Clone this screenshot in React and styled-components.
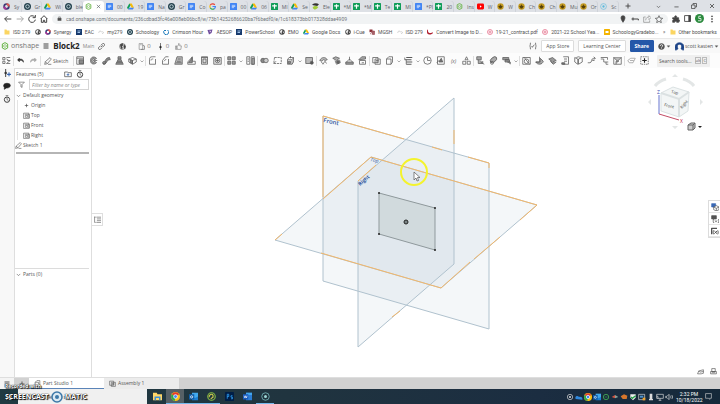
import { useState } from "react";
import styled, { createGlobalStyle } from "styled-components";

const GlobalStyle = createGlobalStyle`
  * {
    box-sizing: border-box;
  }

  body {
    margin: 0;
    font-family: "Open Sans", "Noto Sans", sans-serif;
    font-size: 5px;
    color: #505050;
    background: #fff;
  }

  button, input {
    font: inherit;
    color: inherit;
    margin: 0;
    padding: 0;
    border: 0;
    background: none;
  }

  a {
    color: inherit;
    text-decoration: none;
  }

  svg {
    display: block;
    flex: none;
  }
`;

const Page = styled.div`
  display: flex;
  flex-direction: column;
  min-height: 100vh;
`;

/* browser */

const TabStrip = styled.div`
  display: flex;
  height: 12px;
  background: #dee1e6;
`;

const TabList = styled.div`
  display: flex;
  flex: 1;
  padding-left: 1px;
  min-width: 0;
`;

const BrowserTab = styled.button`
  display: flex;
  flex: 1 1 0;
  min-width: 0;
  align-items: center;
  gap: 4px;
  padding-left: 2px;
  margin-top: 1px;
  overflow: hidden;
  white-space: nowrap;
  color: #5f6368;
  border-radius: 3px 3px 0 0;
  background: ${(props) => (props.$active ? "#fff" : "none")};
  box-shadow: ${(props) => (props.$active ? "none" : "inset -1px 0 0 #cfd3d9")};
`;

const WindowButtons = styled.div`
  display: flex;
  width: 101px;
  align-items: center;
  justify-content: space-between;
  padding: 0 5px 0 6px;
`;

const IconButton = styled.button`
  display: flex;
  align-items: center;
  justify-content: center;
  color: ${(props) => props.$color || "#444"};
`;

const AddressRow = styled.div`
  display: flex;
  align-items: center;
  height: 13px;
  padding: 0 4px;
  gap: 4px;
  background: #fff;
`;

const NavButtons = styled.div`
  display: flex;
  gap: 4px;
`;

const AddressBox = styled.label`
  display: flex;
  flex: 1;
  align-items: center;
  gap: 4px;
  height: 10px;
  padding: 0 5px;
  border-radius: 5px;
  background: #f1f3f4;
`;

const AddressInput = styled.input`
  flex: 1;
  min-width: 0;
  font-family: Roboto, sans-serif;
  color: #70757a;
  outline: none;
`;

const AddressIcons = styled.div`
  display: flex;
  gap: 4px;
`;

const BookmarkRow = styled.nav`
  display: flex;
  align-items: center;
  justify-content: space-between;
  height: 13px;
  padding: 0 3px 0 4px;
  font-family: Roboto, sans-serif;
  white-space: nowrap;
`;

const Bookmark = styled.a`
  display: flex;
  align-items: center;
  gap: 3px;
`;

/* document header */

const Header = styled.header`
  display: flex;
  align-items: center;
  justify-content: space-between;
  height: 15px;
  padding: 0 1px;
  border-top: 1px solid #e9e9e9;
  background: #f8f8f8;
`;

const HeaderGroup = styled.div`
  display: flex;
  align-items: center;
  gap: ${(props) => props.$gap}px;
`;

const Stats = styled.div`
  display: flex;
  align-items: center;
  gap: 6px;
  margin-left: 10px;
`;

const Brand = styled.a`
  display: flex;
  align-items: center;
  gap: 2px;
  font-size: 7px;
  line-height: 8px;
  color: #777;
`;

const DocumentName = styled.h1`
  margin: 0;
  font-size: 8px;
  line-height: 12px;
  font-weight: 700;
  color: #222;
`;

const Muted = styled.span`
  color: #888;
`;

const Counter = styled.button`
  display: flex;
  align-items: center;
  gap: 2px;
  font-size: 6px;
  color: #777;
`;

const HeaderButton = styled.button`
  height: 12px;
  padding: 0 4px;
  border: 1px solid ${(props) => (props.$primary ? "#2457a8" : "#dcdcdc")};
  border-radius: 1px;
  font-weight: ${(props) => (props.$primary ? 700 : 400)};
  color: ${(props) => (props.$primary ? "#fff" : "#555")};
  background: ${(props) => (props.$primary ? "#2457a8" : "#fff")};
`;

/* toolbar */

const Toolbar = styled.div`
  display: flex;
  align-items: center;
  height: 15px;
  padding-right: 10px;
  background: #fcfcfc;
`;

const Tool = styled.button`
  display: flex;
  flex: none;
  align-items: center;
  justify-content: center;
  width: ${(props) => (props.$arrow ? 6 : 13)}px;
  height: 13px;
  color: #5a5a5a;
`;

const ToolDivider = styled.span`
  flex: none;
  width: 1px;
  height: 10px;
  background: #dedede;
`;

const SketchButton = styled.button`
  display: flex;
  flex: none;
  align-items: center;
  gap: 1px;
  height: 13px;
  width: 32px;
  padding-left: 3px;
  color: #555;
`;

const SearchTools = styled.button`
  display: flex;
  flex: none;
  align-items: center;
  justify-content: space-between;
  width: 53px;
  height: 12px;
  margin-left: auto;
  padding: 0 3px 0 2px;
  border-radius: 1px;
  white-space: nowrap;
  color: #555;
  background: #efefef;
`;

const Keys = styled.span`
  display: flex;
  gap: 1px;
`;

const Key = styled.kbd`
  height: 7px;
  border: 1px solid #bbb;
  font-family: inherit;
  font-size: 4px;
  line-height: 5px;
`;

/* workspace */

const Workspace = styled.main`
  display: flex;
  flex: 1;
`;

const Rail = styled.aside`
  display: flex;
  flex-direction: column;
  align-items: center;
  gap: 5px;
  width: 14px;
  padding-top: 1px;
  background: #f8f8f8;
`;

const Panel = styled.section`
  display: flex;
  flex-direction: column;
  width: 78px;
  border: 1px solid #dedede;
  border-bottom: 0;
`;

const PanelHeader = styled.div`
  display: flex;
  align-items: center;
  height: 10px;
  padding: 0 7px 0 1px;
  gap: 4px;
`;

const PanelTitle = styled.h2`
  flex: 1;
  margin: 0;
  font-size: 5px;
  font-weight: 400;
`;

const FilterRow = styled.label`
  display: flex;
  align-items: center;
  gap: 4px;
  height: 11px;
  padding: 0 2px 0 3px;
`;

const FilterInput = styled.input`
  flex: 1;
  min-width: 0;
  height: 11px;
  padding: 0 2px;
  border: 1px solid #d5d5d5;
  font-style: italic;
  background: #fff;

  &::placeholder {
    color: #888;
    opacity: 1;
  }
`;

const Tree = styled.ul`
  flex: 1;
  margin: 0;
  padding: 0;
  list-style: none;
`;

const TreeChildren = styled.ul`
  margin: 0 0 0 2px;
  padding: 0 0 0 5px;
  list-style: none;
  border-left: 1px solid #e4e4e4;
`;

const TreeItem = styled.button`
  display: flex;
  align-items: center;
  gap: 1px;
  width: 100%;
  height: 10px;
  color: #555;
`;

const RollbackBar = styled.li`
  height: 2px;
  margin: 2px 2px 0 1px;
  background: #b5b5b5;
`;

const Parts = styled.div`
  height: 109px;
  margin-right: 2px;
  border-top: 1px solid #dcdcdc;
`;

const Viewport = styled.section`
  position: relative;
  flex: 1;
  min-width: 0;
  background: #fff;
`;

const Scene = styled.svg`
  width: 100%;
  height: 100%;
  font-family: "Open Sans", sans-serif;
`;

const ViewCube = styled.svg`
  position: absolute;
  top: 4px;
  right: 12px;
  font-family: "Open Sans", sans-serif;
`;

const ListToggle = styled.button`
  position: absolute;
  top: 145px;
  left: 0;
  display: flex;
  align-items: center;
  justify-content: center;
  width: 11px;
  height: 13px;
  border: 1px solid #dedede;
  border-left: 0;
  background: #fff;
`;

const SideDock = styled.div`
  position: absolute;
  top: 132px;
  right: 0;
  width: 12px;
  border: 1px solid #dcdcdc;
  border-right: 0;
  background: #fff;
`;

const DockButton = styled.button`
  display: flex;
  align-items: center;
  justify-content: center;
  width: 100%;
  height: 12px;
  border-bottom: 1px solid #e6e6e6;
`;

const ViewActions = styled.div`
  position: absolute;
  right: 3px;
  bottom: 2px;
  display: flex;
  gap: 6px;
`;

/* bottom */

const ElementTabs = styled.div`
  display: flex;
  height: 12px;
  background: #d1d1d1;
  border-top: 1px solid #dedede;
`;

const ManagerButton = styled.button`
  display: flex;
  align-items: center;
  justify-content: center;
  width: ${(props) => props.$width}px;
  background: ${(props) => props.$background};
`;

const ElementTab = styled.button`
  display: flex;
  align-items: center;
  gap: 2px;
  width: 75px;
  padding-left: 5px;
  color: #555;
  border-bottom: 1px solid ${(props) => (props.$active ? "#5b84b8" : "#ececec")};
  background: ${(props) => (props.$active ? "#fff" : "#ececec")};
`;

const Taskbar = styled.footer`
  display: flex;
  height: 15px;
  color: #fff;
  background: linear-gradient(90deg, #203a42 0%, #20343f 40%, #1b2d41 75%, #15293a 100%);
`;

const StartButton = styled.button`
  display: flex;
  align-items: center;
  justify-content: center;
  width: 18px;
`;

const TaskSearch = styled.input`
  width: 129px;
  padding-left: 15px;
  color: #444;
  background: #f0f0f0;

  &::placeholder {
    color: #444;
    opacity: 1;
  }
`;

const TaskApp = styled.button`
  display: flex;
  align-items: center;
  justify-content: center;
  width: 18px;
  border-bottom: 1px solid ${(props) => (props.$running ? "#76b9ed" : "transparent")};
  background: ${(props) => (props.$active ? "#566066" : "none")};
`;

const TaskApps = styled.div`
  display: flex;
  flex: 1;
  padding-left: 1px;
`;

const Tray = styled.div`
  display: flex;
  align-items: center;
  gap: 1px;
  padding-right: 8px;
`;

const Clock = styled.time`
  width: 30px;
  padding: 0 2px;
  line-height: 6px;
  text-align: center;
  white-space: nowrap;
  font-family: Roboto, sans-serif;
`;

const Recorder = styled.div`
  position: absolute;
  left: 5px;
  bottom: 0;
  font-weight: 700;
  color: #fff;
  text-shadow: 0 0 1px #000, 0 0 1px #000, 1px 1px 1px #000;
  pointer-events: none;
`;

const RecorderCaption = styled.div`
  font-size: 5px;
  line-height: 7px;
`;

const RecorderName = styled.div`
  display: flex;
  align-items: center;
  gap: 2px;
  font-size: 7px;
  line-height: 14px;
`;

const Frame = styled.div`
  position: relative;
`;

// every shape is drawn on a 12 x 12 grid
const shapes = {
  tree: <><path d="M1 2h3v3h-3zM1 7h3v3h-3zM6 2h5M6 4l3 2M7 6h4M6 10l5-4M6 10h5" /></>,
  undo: <path d="M4 2L1 5l3 3V6c4-1 6 0 7 3 0-5-3-6-7-5z" fill="#222" stroke="#222" />,
  redo: <path d="M8 2l3 3-3 3V6C4 5 2 6 1 9c0-5 3-6 7-5z" fill="#aaa" stroke="#999" />,
  pencil: <path d="M1 11l1-4 7-6 2 2-6 7-4 1zM2 7l3 3M6 11h5" />,
  extrude: <><path d="M1 1h9v10H1zM1 3h9" /><path d="M4 5h6v5H4z" fill="#888" /></>,
  revolve: <><path d="M10 3C7 0 2 1 2 6s5 6 8 3L8 7C6 9 4 8 4 6s2-3 4-1z" fill="#999" /><path d="M5 6h6" /></>,
  sweep: <><path d="M1 9c4 1 2-7 9-7l1 3c-5-1-4 6-9 6z" fill="#888" /><circle cx="3" cy="9" r="2" /></>,
  loft: <path d="M4 1h4v4l3 6H1l3-6zM3 7h6M2 9h8M4 4h4" fill="#999" />,
  thicken: <><path d="M1 4l5-2 5 2v4l-5 3-5-3zM1 4l5 2v5M6 6l5-2" /><path d="M3 5l3 1v4l-3-1z" fill="#888" /></>,
  down: <path d="M3 5l3 3 3-3" />,
  fillet: <path d="M2 11V5c0-3 1-4 4-4h4M2 11h8V4M4 6c0-2 1-2 3-2" />,
  chamfer: <path d="M2 11V6l4-5h4M2 11h8V4M4 7l3-3" />,
  draft: <><path d="M4 1h7v10H1z" fill="#bbb" /><path d="M5 4h4M4 7h5M3 9h7" /></>,
  rib: <><path d="M1 11h10V7H7V1L1 8z" /><path d="M7 2v7H2z" fill="#888" /></>,
  shell: <><path d="M2 1h8v10H2z" fill="#ddd" /><path d="M4 4h4v5H4zM2 2h8" /></>,
  hole: <><path d="M1 2h10v9H1z" fill="#e4e4e4" /><circle cx="6" cy="6" r="3" /><path d="M6 4v4M4 6h4" /></>,
  pattern: <><path d="M1 1h4v4H1zM7 1h4v4H7zM1 7h4v4H1zM7 7h4v4H7z" fill="#999" /></>,
  mirror: <><path d="M1 1h4v10H1zM11 1H7v10h4z" /><path d="M8 3h3v8H8z" fill="#aaa" /><path d="M2 4h2M2 7h2" /></>,
  boolean: <><circle cx="4" cy="6" r="3" fill="#888" /><circle cx="8" cy="6" r="3" fill="#ccc" /></>,
  split: <><path d="M2 2h9v8H1z" strokeDasharray="3 1" /><path d="M1 10l3-3" /></>,
  transform: <><path d="M2 5h6v6H2zM2 5l2-3h6v6l-2 3M8 5l2-3" /><path d="M3 7h3v3H3z" fill="#888" /><path d="M6 0v3" /></>,
  remove: <><path d="M1 2h9v8H1z" fill="#bbb" /><circle cx="9" cy="9" r="2" fill="#555" /></>,
  face: <><path d="M1 6c2-5 8-5 10-1L8 6c-2-2-3-1-4 1z" fill="#bbb" /><path d="M5 11l3-4 2 3M3 8l3 3" /></>,
  moveFace: <><path d="M1 3l4-2 5 2-4 3z" fill="#aaa" /><path d="M4 6l2 5 5-2-1-4" /><circle cx="8" cy="8" r="2" fill="#666" /></>,
  replace: <><path d="M1 8h10v3H1z" fill="#999" /><path d="M2 8l4-4 4 4M6 1v5" /></>,
  offset: <><path d="M2 6h8v5H2z" /><path d="M1 5l4-4h5v3z" fill="#aaa" /><path d="M5 9h3" /></>,
  copy: <><path d="M1 2h7v7H1zM4 4h7v7H4z" /><path d="M5 6h4M5 8h4" /></>,
  surface: <><path d="M2 4h6v7H2zM2 4l3-3h5v7l-2 3" /></>,
  sheet: <><path d="M3 2h8M1 5h9M3 8h8M3 11h7" strokeWidth="1.5" /><path d="M1 2v3M3 5v6" /></>,
  helix: <><circle cx="6" cy="6" r="5" /><path d="M6 2v4h4" /></>,
  point: <><path d="M2 1h9v10H2z" /><path d="M4 8l3-5 2 5zM1 9l4-4" fill="#777" /></>,
  tripod: <><path d="M6 1l2 4H4zM1 7h4v4H1zM7 7h4v4H7z" /></>,
  flange: <><path d="M1 1h6v4H1zM3 5v5h6V7" fill="#aaa" /><path d="M6 8l5 3" /></>,
  bend: <><ellipse cx="6" cy="5" rx="5" ry="3" transform="rotate(-40 6 5)" fill="#aaa" /><circle cx="4" cy="9" r="2" /></>,
  tab: <><path d="M1 2h8v3H1zM4 5h6v3H4zM7 8h4v3" fill="#999" /></>,
  form: <><path d="M1 2h10v9H1z" /><circle cx="6" cy="7" r="3" /><path d="M3 2l7 9" /></>,
  gusset: <><path d="M1 8c2 4 9 4 10-1L7 3v5z" fill="#aaa" /><path d="M6 1v7H1" /></>,
  hem: <><path d="M1 4l5-2 5 4-5 2zM3 7l4 4 4-3" fill="#999" /></>,
  joint: <><path d="M3 1h7v10H2M4 4h4M4 7h4" /><path d="M1 9h4v2H1z" fill="#777" /></>,
  corner: <><path d="M1 2l4 2v7L1 8zM11 2L6 4v7l5-3z" /><path d="M3 2l3-1 3 1" /></>,
  bendRelief: <path d="M1 9h3c3 0 1-6 5-6h2M7 6h3M9 1l2 2-2 2" />,
  breakCorner: <path d="M1 2h9M1 4h4v4h6M10 2v3M8 8v3h3" />,
  makeCorner: <><path d="M1 2h10v9H1z" /><path d="M1 2l5 5 5-5M4 11V7h4" fill="#bbb" /></>,
  finish: <path d="M1 6l4-3h6L8 9H3zM4 6h5" stroke="#999" />,
  addTool: <><path d="M1 1h10v10H1z" strokeDasharray="2 1" /><path d="M6 3v6M3 6h6" strokeWidth="1.5" stroke="#222" /></>,
  filter: <path d="M1 2h10L7 6v5L5 10V6z" />,
  folder: <><path d="M1 3h4l1 1h5v6H1z" /><path d="M6 5v4M4 7h4" stroke="#2457a8" /></>,
  stopwatch: <><circle cx="6" cy="7" r="4" strokeWidth="1.5" /><path d="M4 1h4M6 4v3l2 1" /></>,
  versions: <><path d="M4 0v12" strokeWidth="1.5" /><circle cx="4" cy="6" r="1.5" fill="#222" /><path d="M9 5v6M6 8h6" stroke="#2457a8" strokeWidth="1.5" /></>,
  comment: <path d="M1 5c0-4 10-4 10 0s-5 4-6 4l-3 2V8C1 7 1 6 1 5z" fill="#222" stroke="#222" />,
  plane: <><path d="M1 2h9v9H1zM3 4h8v7" /><path d="M4 6h4v3H4z" /></>,
  origin: <><path d="M6 3v6M3 6h6" /><circle cx="6" cy="6" r="1" /></>,
  list: <path d="M4 2h8M5 5h7M5 8h7M4 11h8M1 1v10M1 2h2M1 11h2" />,
  back: <path d="M11 6H1M5 2L1 6l4 4" strokeWidth="1.5" />,
  forward: <path d="M1 6h10M7 2l4 4-4 4" strokeWidth="1.5" />,
  reload: <path d="M10 3a5 5 0 1 0 1 4M11 0v4H7" strokeWidth="1.5" />,
  home: <path d="M1 6l5-5 5 5M2 5v6h3V8h2v3h3V5" strokeWidth="1.5" />,
  lock: <><path d="M2 5h8v6H2z" fill="currentColor" /><path d="M4 5V2h4v3" /></>,
  pin: <path d="M6 11C4 8 3 6 3 4a3 3 0 0 1 6 0c0 2-1 4-3 7z" fill="currentColor" />,
  key: <><circle cx="3" cy="6" r="1.500" strokeWidth="1.500" /><path d="M5 6h6v2" strokeWidth="1.500" /></>,
  share: <path d="M4 3H1v8h9V8M4 8c0-4 3-5 5-5V1l3 3-3 3V5" stroke="#888" />,
  star: <path d="M6 1l1.500 3.500 4 .5-3 2.500 1 4L6 9.500 2.500 11.500l1-4-3-2.500 4-.5z" />,
  puzzle: <path d="M1 4h3c-1-4 4-4 3 0h3v3c2 0 2 3 0 3v1H7c0-2-3-2-3 0H1V8c2 0 2-2 0-2z" fill="currentColor" />,
  sidebar: <><path d="M1 1h10v10H1z" strokeWidth="1.5" /><path d="M8 1h3v10H8z" fill="currentColor" /></>,
  dots: <><circle cx="6" cy="2" r=".8" fill="currentColor" /><circle cx="6" cy="6" r=".8" fill="currentColor" /><circle cx="6" cy="10" r=".8" fill="currentColor" /></>,
  plus: <path d="M6 1v10M1 6h10" strokeWidth="1.8" />,
  minus: <path d="M1 7h10" strokeWidth="1.8" />,
  restore: <path d="M1 4h7v7H1zM4 4V1h7v7H8" strokeWidth="1.5" />,
  close: <path d="M2 2l8 8M10 2l-8 8" strokeWidth="1.6" />,
  menu: <path d="M1 2h10M1 6h10M1 10h10" strokeWidth="2" />,
  link: <path d="M5 7l3-3M4 5L1 8c-1 2 1 4 3 3l3-3M5 4l3-3c2-1 4 1 3 3L8 7" strokeWidth="1.3" />,
  globe: <><circle cx="6" cy="6" r="5" /><path d="M2 3l4-2 1 3-2 2 1 3-2 1zM9 3l2 3-1 4-2-3z" fill="currentColor" /></>,
  document: <><path d="M2 1h6v10H2z" /><path d="M8 4l3 1v6H5M4 3h2" strokeWidth="1.3" /></>,
  branch: <><path d="M6 0v12" stroke="#222" /><circle cx="6" cy="7" r="1.500" fill="#222" stroke="#222" /></>,
  thumb: <path d="M1 5h2v6H1zM3 6l3-2V1c2 0 3 1 2 4h3l-1 6H4z" />,
  learn: <path d="M3 1C1 1 3 5 1 6c2 1 0 5 2 5M9 1c2 0 0 4 2 5-2 1 0 5-2 5M4 6l1 2 3-4" />,
  help: <><circle cx="6" cy="6" r="5" fill="#555" stroke="#555" /><path d="M4 5c0-3 4-3 4 0 0 1-2 1-2 3M6 9v1" stroke="#fff" strokeWidth="1.3" /></>,
  caret: <path d="M3 4h6L6 8z" fill="currentColor" />,
  user: <path d="M1 11c1-1 2-1 3-2C0 1 12 1 8 9c1 1 2 1 3 2C14 5 10 1 6 1S-2 5 1 11z" fill="#1d4488" stroke="#1d4488" />,
  cubes: <><path d="M1 1h6v5H1z" fill="#3a68b5" stroke="#3a68b5" /><path d="M4 6l4-2 4 2v4l-4 2-4-2zM4 6l4 2v4M8 8l4-2" fill="#fff" /></>,
  config: <><path d="M1 1h7v5H1z" fill="#555" /><path d="M4 6c-1 2-1 4 0 6M11 6c1 2 1 4 0 6M6 8l3 3M9 8l-3 3M1 3h7" /></>,
  variables: <><path d="M1 11V2h8" strokeWidth="2" /><path d="M4 5c-1 2-1 4 0 6M10 5c1 2 1 4 0 6M5 6l4 4M9 6l-4 4" strokeWidth="1.4" /></>,
  scale: <path d="M1 10l2-5 8-2v6l-4 1zM3 5l2 2 6-1" />,
  print: <path d="M3 1h6v5H3zM1 6h10v4H1zM3 8h6" />,
};

function Icon({ name, size = 9 }) {
  return (
    <svg width={size} height={size} viewBox="0 0 12 12" fill="none" stroke="currentColor" strokeWidth="1" strokeLinejoin="round" aria-hidden="true">
      {shapes[name]}
    </svg>
  );
}

const logos = {
  synergy: <><circle cx="6" cy="6" r="4" fill="none" stroke="#3a3b78" strokeWidth="3" /><path d="M6 2a4 4 0 0 1 4 4" fill="none" stroke="#e2574c" strokeWidth="3" /><path d="M2 6a4 4 0 0 0 4 4" fill="none" stroke="#a83293" strokeWidth="3" /></>,
  schoology: <><circle cx="6" cy="6" r="6" fill="#23404d" /><circle cx="6" cy="6" r="3" fill="none" stroke="#d5e6ea" strokeWidth="1.500" /></>,
  drive: <><path d="M4 1h4l4 7H8z" fill="#fbbc04" /><path d="M4 1L0 8l2 3 4-7z" fill="#0f9d58" /><path d="M2 11h8l2-3H4z" fill="#4285f4" /></>,
  docs: <><rect width="12" height="12" rx="1" fill="#4285f4" /><path d="M3 4h6M3 6h6M3 8h4" stroke="#fff" /></>,
  sheets: <><rect width="12" height="12" rx="1" fill="#0f9d58" /><path d="M2 5h8M6 2v8" stroke="#fff" strokeWidth="2" /></>,
  google: <><path d="M10 3a5 5 0 0 0-8 1" fill="none" stroke="#ea4335" strokeWidth="2" /><path d="M2 4a5 5 0 0 0 0 4" fill="none" stroke="#fbbc04" strokeWidth="2" /><path d="M2 8a5 5 0 0 0 7 2" fill="none" stroke="#34a853" strokeWidth="2" /><path d="M6 6h5c0 2-1 3-2 4" fill="none" stroke="#4285f4" strokeWidth="2" /></>,
  onshape: <><path d="M6 1l4 2v6l-4 2-4-2V3z" fill="none" stroke="#66b345" strokeWidth="1.500" /><path d="M4 5l2-1 2 1v2L6 8 4 7z" fill="none" stroke="#66b345" /></>,
  leaf: <><path d="M0 3c4-3 8-3 12-1L9 5 2 4z" fill="#333" /><path d="M1 8c4-5 8-2 10-1-3 4-7 6-10 1z" fill="#a3cd39" /></>,
  youtube: <><rect y="1" width="12" height="10" rx="2" fill="#f00" /><path d="M5 4l3 2-3 2z" fill="#fff" /></>,
  gold: <><circle cx="6" cy="6" r="5.500" fill="#c49b22" /><path d="M3 5l2 3 1-3 1 3 2-3" fill="none" stroke="#54400a" strokeWidth="2" /></>,
  screencast: <><circle cx="6" cy="6" r="5" fill="none" stroke="#58b9dc" /><circle cx="6" cy="6" r="2" fill="#58b9dc" /></>,
  folderYellow: <path d="M1 1h4l1 2h5v8H1z" fill="#fbd561" />,
  globe: <><circle cx="6" cy="6" r="5.500" fill="#444" /><path d="M3 3l3-1 1 2-2 2 1 3-2 0-2-3zM9 4l1 3-2 1z" fill="#fff" /></>,
  navy: <><rect width="12" height="12" fill="#173a6d" /><path d="M3 4h6M3 7h5" stroke="#9fc1e6" strokeWidth="2" /></>,
  cloud: <path d="M2 8c-2-4 4-5 5-2 4-2 6 3 1 3" fill="none" stroke="#aaa" />,
  swirl: <path d="M9 2a5 5 0 1 1-5 0L6 4" fill="none" stroke="#1476b8" strokeWidth="2" />,
  aesop: <><path d="M1 2l10-1-2 7-5 3z" fill="#6d4a9b" /><path d="M5 3l3 1-2 3z" fill="#fff" /></>,
  maroon: <><path d="M1 1h6v5H1z" fill="#8a2c35" /><path d="M4 4h7v7H7zM2 7l2 4" fill="#a7626a" stroke="#8a2c35" /></>,
  adobe: <path d="M2 1c0 5 0 6 3 7s6-2 7-1-3 4-7 4-5-2-5-5 0-5 2-5z" fill="#b02030" />,
  pink: <><circle cx="6" cy="6" r="5" fill="none" stroke="#e36b87" strokeWidth="1.500" /><circle cx="6" cy="6" r="2" fill="none" stroke="#e36b87" strokeWidth="1.500" /></>,
  slides: <><rect width="12" height="12" rx="1" fill="#f4b400" /><path d="M3 4h6v4H3z" fill="#fff" /></>,
  green: <><circle cx="6" cy="6" r="6" fill="#2b8a3e" /><path d="M8 3H5v3h3v3H4" fill="none" stroke="#fff" /></>,
  windows: <path d="M0 1h5v5H0zM6 1h6v5H6zM0 7h5v5H0zM6 7h6v5H6z" fill="#fff" />,
  explorer: <><path d="M0 1h5l1 2h6v8H0z" fill="#ffd667" /><path d="M2 6h8v5H8V8H4v3H2z" fill="#3c8fd6" /></>,
  chrome: <><circle cx="6" cy="6" r="6" fill="#fbc116" /><path d="M6 6L1 3a6 6 0 0 1 10 0z" fill="#e33b2e" /><path d="M6 6L1 3a6 6 0 0 0 4 9z" fill="#2da94f" /><circle cx="6" cy="6" r="2.500" fill="#4285f4" stroke="#fff" /></>,
  outlook: <><path d="M4 1h8v9H4z" fill="#42a9ec" /><path d="M4 6l4 2 4-2v5H4z" fill="#1d7fd1" /><rect y="3" width="7" height="7" fill="#0f5ca8" /><circle cx="3.500" cy="6.500" r="1.500" fill="none" stroke="#fff" /></>,
  camo: <><circle cx="6" cy="6" r="5" fill="none" stroke="#86bc42" strokeWidth="1.500" /><path d="M3 7a3 3 0 0 1 5-3M5 9l3-2V4" fill="none" stroke="#d3cf4c" strokeWidth="1.500" /></>,
  photoshop: <><rect width="12" height="12" rx="1" fill="#001e46" /><path d="M3 9V3h2v3H3M10 5H8v2h2v2H8" fill="none" stroke="#31a8ff" /></>,
  word: <><path d="M4 1h8v10H4z" fill="#2b7cd3" /><path d="M4 1h8v3H4z" fill="#41a5ee" /><rect y="3" width="7" height="7" fill="#185abd" /><path d="M1.500 5l1 3 1-3 1 3 1-3" fill="none" stroke="#fff" strokeWidth=".8" /></>,
  ring: <><circle cx="6" cy="6" r="5" fill="none" stroke="#7cc1c4" /><circle cx="6" cy="6" r="2" fill="#9ed7d5" /></>,
  record: <><circle cx="6" cy="6" r="4" fill="none" stroke="#ddd" /><circle cx="6" cy="6" r="1.500" fill="#ddd" /></>,
  onedrive: <path d="M1 9c-2-4 3-6 5-3 3-1 6 1 5 4z" fill="#2f88dd" />,
  greenRing: <><circle cx="6" cy="6" r="4" fill="none" stroke="#3c9650" strokeWidth="1.500" /><path d="M4 6h4" stroke="#3c9650" /></>,
  bird: <><path d="M1 6l5-3v5z" fill="#d65441" /><path d="M6 3l5 3-5 2z" fill="#8ca39a" /></>,
  fox: <path d="M1 5l5-3 5 2-1 5H4z" fill="#d5762c" />,
  shield: <><path d="M2 2h8v5l-4 4-4-4z" fill="#eee" /><path d="M3 6l2 2 5-4" fill="none" stroke="#24a148" strokeWidth="2" /></>,
  monitor: <><path d="M1 2h9v8H1z" fill="none" stroke="#ddd" /><path d="M7 7h4v4H7z" fill="#f0a42e" /><path d="M3 4h5v3H3z" fill="#4b91cd" /></>,
  mic: <path d="M4 1h4v8H4zM3 9h6v2H3z" fill="#ddd" />,
  network: <path d="M1 2h10v6H1zM4 11h4M6 8v3M1 5h2v4" fill="none" stroke="#ddd" />,
  volume: <path d="M1 5h2l3-3v8L3 7H1zM8 4c1 1 1 3 0 4M10 3c2 2 2 4 0 6" fill="none" stroke="#ddd" />,
  notification: <path d="M1 1h10v8H8v2L6 9H1z" fill="none" stroke="#ddd" />,
};

function Logo({ name, size = 7 }) {
  return (
    <svg width={size} height={size} viewBox="0 0 12 12" aria-hidden="true">
      {logos[name]}
    </svg>
  );
}

const browserTabs = [
  ["synergy", "Sy"], ["schoology", "Gr"], ["drive", "Wi"], ["schoology", "ble"], ["onshape", ""],
  ["docs", "00"], ["drive", "19"], ["docs", "Na"], ["schoology", "Gr"], ["docs", "Co"],
  ["google", "pa"], ["docs", "00"], ["drive", "06"], ["sheets", "MI"], ["drive", "Se"],
  ["leaf", "Ele"], ["sheets", "*M"], ["sheets", "*M"], ["sheets", "Te"], ["sheets", "MI"],
  ["docs", "*Pl"], ["sheets", "20"], ["onshape", "Ins"], ["youtube", "W"], ["gold", "W"],
  ["gold", "Ch"], ["gold", "Ch"], ["gold", "Mu"], ["gold", "Or"], ["screencast", "Sc"],
];

const bookmarks = [
  ["folderYellow", "ISD 279"], ["globe", ""], ["synergy", "Synergy"], ["navy", "EAC"], ["cloud", "my279"],
  ["schoology", "Schoology"], ["swirl", "Crimson Hour"], ["aesop", "AESOP"], ["navy", "PowerSchool"],
  ["globe", "EMO"], ["drive", "Google Docs"], ["globe", "i-Cue"], ["maroon", "MGSH"], ["cloud", "ISD 279"],
  ["adobe", "Convert Image to D..."], ["pink", "19-21_contract.pdf"], ["pink", "2021-22 School Yea..."],
  ["slides", "SchoologyGradebo..."],
];

const toolGroups = [
  ["extrude", "revolve", "sweep", "loft", "thicken", "down"],
  ["fillet", "chamfer", "draft", "rib", "shell", "hole"],
  ["pattern", "down", "mirror"],
  ["boolean", "split", "transform", "down", "remove"],
  ["face", "moveFace", "replace", "offset"],
  ["copy", "surface", "down", "sheet", "down", "helix", "point", "fx", "tripod"],
  ["flange", "bend", "tab", "down"],
  ["form", "gusset", "hem", "joint", "corner", "bendRelief", "breakCorner", "makeCorner"],
  ["finish", "addTool"],
];

const taskApps = [
  ["explorer", false], ["chrome", true, true], ["outlook", true], ["camo", true],
  ["photoshop", false], ["word", false], ["ring", true],
];

const trayIcons = ["record", "onedrive", "chrome", "outlook", "greenRing", "bird", "fox", "shield", "monitor", "mic", "network", "volume"];

function Browser() {
  const [url, setUrl] = useState(
    "cad.onshape.com/documents/236cdbad3fc46e008eb06bc8/w/73b14252686620ba7f6bedf0/e/1c618373bb017328ddae4909"
  );

  return (
    <>
      <TabStrip>
        <TabList>
          {browserTabs.map(([logo, title], i) => (
            <BrowserTab key={i} $active={i === 4} aria-label={title || "Block2"}>
              <Logo name={logo} />
              {i === 4 ? <Icon name="close" size={5} /> : title}
            </BrowserTab>
          ))}
        </TabList>
        <WindowButtons>
          <IconButton aria-label="New tab"><Icon name="plus" size={6} /></IconButton>
          <span />
          <IconButton aria-label="Search tabs"><Icon name="down" size={7} /></IconButton>
          <IconButton aria-label="Minimize"><Icon name="minus" size={5} /></IconButton>
          <IconButton aria-label="Restore"><Icon name="restore" size={6} /></IconButton>
          <IconButton aria-label="Close"><Icon name="close" size={6} /></IconButton>
        </WindowButtons>
      </TabStrip>
      <AddressRow>
        <NavButtons>
          <IconButton aria-label="Back"><Icon name="back" size={8} /></IconButton>
          <IconButton aria-label="Forward" $color="#aaa"><Icon name="forward" size={8} /></IconButton>
          <IconButton aria-label="Reload"><Icon name="reload" size={8} /></IconButton>
          <IconButton aria-label="Home"><Icon name="home" size={8} /></IconButton>
        </NavButtons>
        <AddressBox>
          <Icon name="lock" size={5} />
          <AddressInput aria-label="Address" value={url} onChange={(e) => setUrl(e.target.value)} />
          <AddressIcons>
            {["pin", "key", "share", "star"].map((name) => (
              <IconButton key={name} aria-label={name}><Icon name={name} size={8} /></IconButton>
            ))}
          </AddressIcons>
        </AddressBox>
        <AddressIcons>
          <IconButton aria-label="Extensions"><Icon name="puzzle" size={8} /></IconButton>
          <IconButton aria-label="Side panel"><Icon name="sidebar" size={7} /></IconButton>
          <IconButton aria-label="Profile"><Logo name="green" size={9} /></IconButton>
          <IconButton aria-label="Menu"><Icon name="dots" size={8} /></IconButton>
        </AddressIcons>
      </AddressRow>
      <BookmarkRow>
        {bookmarks.map(([logo, title], i) => (
          <Bookmark key={i} href="#" aria-label={title || "Bookmark"}>
            <Logo name={logo} size={6} />
            {title}
          </Bookmark>
        ))}
        <span>»</span>
        <Bookmark href="#"><Logo name="folderYellow" size={6} />Other bookmarks</Bookmark>
      </BookmarkRow>
    </>
  );
}

function DocumentHeader() {
  return (
    <Header>
      <HeaderGroup $gap={4}>
        <Brand href="#"><Logo name="onshape" size={8} />onshape</Brand>
        <IconButton aria-label="Menu"><Icon name="menu" size={6} /></IconButton>
        <HeaderGroup $gap={3}>
          <DocumentName>Block2</DocumentName>
          <Muted>Main</Muted>
        </HeaderGroup>
        <IconButton aria-label="Copy link"><Icon name="link" size={7} /></IconButton>
        <Stats>
          <IconButton aria-label="Public"><Icon name="globe" size={7} /></IconButton>
          <span />
          <Counter><Icon name="document" size={7} />0</Counter>
          <Counter><Icon name="branch" size={7} />0</Counter>
          <Counter><Icon name="thumb" size={7} />0</Counter>
        </Stats>
      </HeaderGroup>
      <HeaderGroup $gap={4}>
        <IconButton aria-label="Learning"><Icon name="learn" size={8} /></IconButton>
        <HeaderButton>App Store</HeaderButton>
        <HeaderButton>Learning Center</HeaderButton>
        <HeaderButton $primary>Share</HeaderButton>
        <HeaderGroup $gap={1}>
          <IconButton aria-label="Help"><Icon name="help" size={7} /></IconButton>
          <Icon name="caret" size={5} />
        </HeaderGroup>
        <HeaderGroup $gap={1}>
          <Icon name="user" size={9} />
          <span>scott kasten</span>
          <Icon name="caret" size={5} />
        </HeaderGroup>
      </HeaderGroup>
    </Header>
  );
}

function FeatureToolbar() {
  return (
    <Toolbar>
      <Tool aria-label="Feature list"><Icon name="tree" /></Tool>
      <ToolDivider />
      <Tool aria-label="Undo"><Icon name="undo" size={7} /></Tool>
      <Tool aria-label="Redo"><Icon name="redo" size={7} /></Tool>
      <ToolDivider />
      <SketchButton><Icon name="pencil" size={8} />Sketch</SketchButton>
      {toolGroups.map((group, g) => [
        <ToolDivider key={g} />,
        ...group.map((name, i) => (
          <Tool key={`${g}-${i}`} $arrow={name === "down"} aria-label={name}>
            {name === "fx" ? <i>(x)</i> : <Icon name={name} size={name === "down" ? 6 : 9} />}
          </Tool>
        )),
      ])}
      <SearchTools>
        Search tools...
        <Keys><Key>alt</Key><Key>C</Key></Keys>
      </SearchTools>
    </Toolbar>
  );
}

function FeaturePanel() {
  const [filter, setFilter] = useState("");

  return (
    <Panel>
      <PanelHeader>
        <PanelTitle>Features (5)</PanelTitle>
        <IconButton aria-label="Add folder"><Icon name="folder" size={8} /></IconButton>
        <IconButton aria-label="Rebuild time"><Icon name="stopwatch" size={8} /></IconButton>
      </PanelHeader>
      <FilterRow>
        <Icon name="filter" size={7} />
        <FilterInput
          aria-label="Filter features"
          placeholder="Filter by name or type"
          value={filter}
          onChange={(e) => setFilter(e.target.value)}
        />
      </FilterRow>
      <Tree>
        <li>
          <TreeItem><Icon name="down" size={7} />Default geometry</TreeItem>
          <TreeChildren>
            <li><TreeItem><Icon name="origin" size={7} />Origin</TreeItem></li>
            <li><TreeItem><Icon name="plane" size={7} />Top</TreeItem></li>
            <li><TreeItem><Icon name="plane" size={7} />Front</TreeItem></li>
            <li><TreeItem><Icon name="plane" size={7} />Right</TreeItem></li>
          </TreeChildren>
        </li>
        <li><TreeItem><Icon name="pencil" size={7} />Sketch 1</TreeItem></li>
        <RollbackBar />
      </Tree>
      <Parts>
        <TreeItem><Icon name="down" size={7} />Parts (0)</TreeItem>
      </Parts>
    </Panel>
  );
}

function PlaneScene() {
  const blue = "#b0c2ce";
  const orange = "#f3b76a";

  return (
    <Scene viewBox="92 68 628 309" fill="none">
      <g fill="#9fb9c6" fillOpacity="0.11">
        <path d="M323 116L489 163V329L323 281z" />
        <path d="M454 98V264L358 347V181z" />
        <path d="M371 157L537 205L441 288L275 240z" />
      </g>
      <g stroke={blue}>
        <path d="M323 116L489 163V329L323 281z" />
        <path d="M454 98V264L358 347V181z" />
        <path d="M371 157L537 205L441 288L275 240z" />
      </g>
      <g stroke={orange}>
        <path d="M323 197V116L404 139" />
        <path d="M432 147L442 150M468 157L489 163V168" />
        <path d="M454 130V144" />
        <path d="M358 181L376 165" />
        <path d="M323 199L371 157L537 205L520 220M500 237L474 259M470 262L441 288L321 253" />
        <path d="M275 240L282 234M392 317L400 311" />
      </g>
      <path d="M379 193L435 208V250L379 234z" fill="#b9c6c3" fillOpacity="0.4" stroke="#8f999c" />
      <g fill="#222">
        <circle cx="379" cy="193" r="1" />
        <circle cx="435" cy="208" r="1" />
        <circle cx="435" cy="250" r="1" />
        <circle cx="379" cy="234" r="1" />
      </g>
      <circle cx="406" cy="222" r="2" fill="#7b8586" stroke="#222" />
      <g fill="#2f559c">
        <text x="323" y="122" fontSize="6" fontWeight="600" transform="rotate(12 323 122)">Front</text>
        <text x="370" y="161" fontSize="5" fontStyle="italic" transform="rotate(14 370 161)">Top</text>
        <text x="360" y="186" fontSize="5" fontWeight="700" transform="rotate(-41 360 186)">Right</text>
      </g>
      <circle cx="414" cy="172" r="13" stroke="#f4f32d" strokeWidth="2" />
      <path d="M414 172v8l2-2 1 3 1.500-.5-1-3H420z" fill="#fff" stroke="#555" strokeWidth="0.700" />
    </Scene>
  );
}

function Viewer() {
  return (
    <Viewport>
      <PlaneScene />
      <ViewCube width="64" height="64" viewBox="644 72 64 64" fill="none">
        <g stroke="#e3e6e6" strokeWidth="3">
          <path d="M655 86Q659 81 666 79M683 79Q690 81 694 86" />
        </g>
        <path d="M672 77l3-3 3 3zM651 99v6l-3-3zM700 99v6l3-3zM672 126h6l-3 3z" fill="#e3e6e6" />
        <path d="M661 93L673 87L689 92L688 111L679 117L661 111z" fill="#f3f6f6" stroke="#dbe2e3" />
        <path d="M661 93L679 99L689 92M679 99V117" stroke="#dbe1e2" strokeWidth="2" />
        <g fill="#333" fontSize="4">
          <text x="664" y="106" transform="rotate(14 664 106)">Front</text>
          <text x="671" y="93" transform="rotate(14 671 93)">Top</text>
          <text x="682" y="109" transform="rotate(-50 682 109)">Right</text>
        </g>
        <path d="M659 95V114" stroke="#6675cf" />
        <path d="M659 114L679 120" stroke="#c44d66" />
        <text x="657" y="94" fontSize="5" fill="#3b4ab0">Z</text>
        <text x="680" y="123" fontSize="5" fill="#c22845">X</text>
        <path d="M688 125l3-2h4v5l-2 2h-5zM688 125h5v5M693 125l2-2" fill="#ccc" stroke="#666" />
        <path d="M698 126h4l-2 2z" fill="#222" />
      </ViewCube>
      <ListToggle aria-label="Toggle list"><Icon name="list" size={7} /></ListToggle>
      <SideDock>
        <DockButton aria-label="Appearances"><Icon name="cubes" size={8} /></DockButton>
        <DockButton aria-label="Configurations"><Icon name="config" size={8} /></DockButton>
        <DockButton aria-label="Variables"><Icon name="variables" size={8} /></DockButton>
      </SideDock>
      <ViewActions>
        <IconButton aria-label="Measure"><Icon name="scale" size={7} /></IconButton>
        <IconButton aria-label="Mass properties"><Icon name="print" size={7} /></IconButton>
      </ViewActions>
    </Viewport>
  );
}

function BottomBars() {
  return (
    <Frame>
      <ElementTabs>
        <ManagerButton $width={14} $background="#f4f4f4" aria-label="Tab manager"><Icon name="menu" size={6} /></ManagerButton>
        <ManagerButton $width={15} $background="#d1d1d1" aria-label="Add tab"><Icon name="plus" size={6} /></ManagerButton>
        <ElementTab $active><Icon name="surface" size={7} />Part Studio 1</ElementTab>
        <ElementTab><Icon name="copy" size={7} />Assembly 1</ElementTab>
      </ElementTabs>
      <Taskbar>
        <StartButton aria-label="Start"><Logo name="windows" size={6} /></StartButton>
        <TaskSearch aria-label="Search" placeholder="Type here to search" />
        <TaskApps>
          {taskApps.map(([logo, running, active]) => (
            <TaskApp key={logo} $running={running} $active={active} aria-label={logo}>
              <Logo name={logo} size={9} />
            </TaskApp>
          ))}
        </TaskApps>
        <Tray>
          {trayIcons.map((name) => <Logo key={name} name={name} size={8} />)}
          <Clock>2:32 PM<br />10/18/2022</Clock>
          <Logo name="notification" size={7} />
        </Tray>
      </Taskbar>
      <Recorder>
        <RecorderCaption>Recorded with</RecorderCaption>
        <RecorderName>
          SCREENCAST
          <svg width="12" height="12" viewBox="0 0 12 12">
            <circle cx="6" cy="6" r="5" fill="#dce9f2" stroke="#3d78a8" strokeWidth="1.500" />
            <circle cx="6" cy="6" r="2" fill="#3d78a8" />
          </svg>
          MATIC
        </RecorderName>
      </Recorder>
    </Frame>
  );
}

function App() {
  return (
    <Page>
      <GlobalStyle />
      <Browser />
      <DocumentHeader />
      <FeatureToolbar />
      <Workspace>
        <Rail>
          <IconButton aria-label="Versions"><Icon name="versions" size={8} /></IconButton>
          <IconButton aria-label="Comments"><Icon name="comment" size={8} /></IconButton>
          <IconButton aria-label="History"><Icon name="stopwatch" size={8} /></IconButton>
        </Rail>
        <FeaturePanel />
        <Viewer />
      </Workspace>
      <BottomBars />
    </Page>
  );
}

export default App;
